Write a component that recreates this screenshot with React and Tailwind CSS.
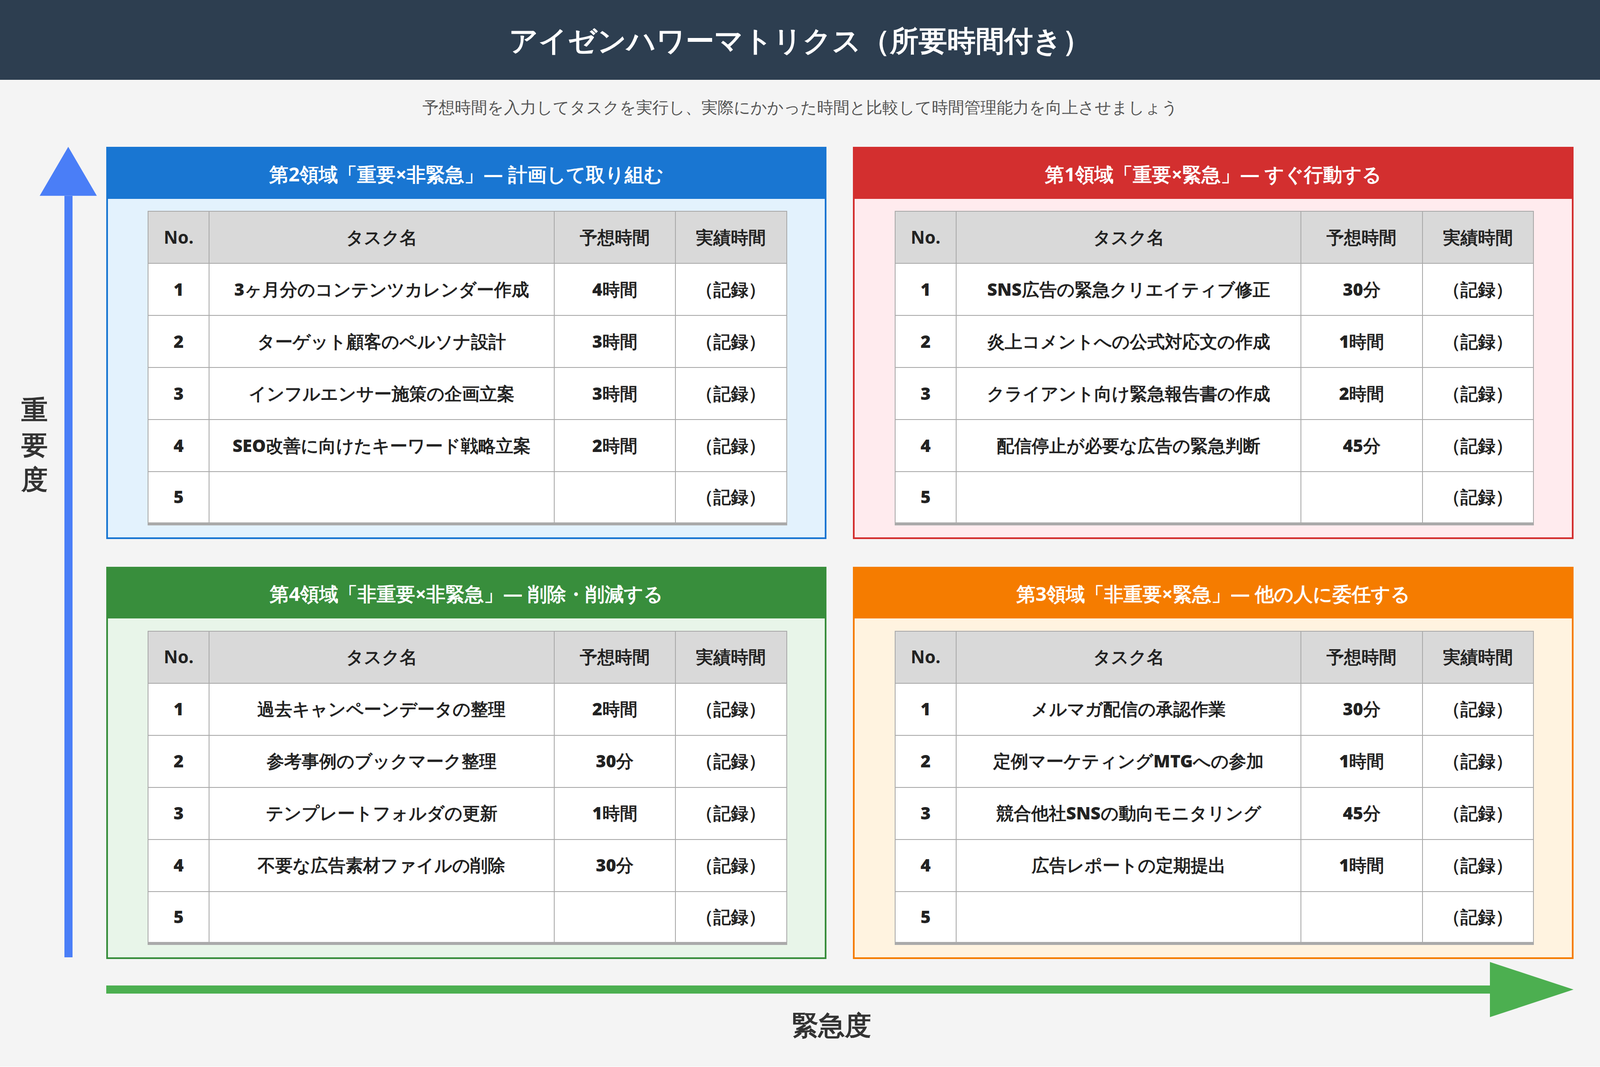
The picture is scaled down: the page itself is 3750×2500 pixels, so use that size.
import React from 'react';

const quads = [
  {
    title: '第2領域「重要×非緊急」— 計画して取り組む',
    head: 'bg-[#1976d2]', border: 'border-[#1976d2]', bg: 'bg-[#e3f2fd]',
    rows: [
      ['3ヶ月分のコンテンツカレンダー作成', '4時間'],
      ['ターゲット顧客のペルソナ設計', '3時間'],
      ['インフルエンサー施策の企画立案', '3時間'],
      ['SEO改善に向けたキーワード戦略立案', '2時間'],
      ['', ''],
    ],
  },
  {
    title: '第1領域「重要×緊急」— すぐ行動する',
    head: 'bg-[#d32f2f]', border: 'border-[#d32f2f]', bg: 'bg-[#ffebee]',
    rows: [
      ['SNS広告の緊急クリエイティブ修正', '30分'],
      ['炎上コメントへの公式対応文の作成', '1時間'],
      ['クライアント向け緊急報告書の作成', '2時間'],
      ['配信停止が必要な広告の緊急判断', '45分'],
      ['', ''],
    ],
  },
  {
    title: '第4領域「非重要×非緊急」— 削除・削減する',
    head: 'bg-[#388e3c]', border: 'border-[#388e3c]', bg: 'bg-[#e8f5e9]',
    rows: [
      ['過去キャンペーンデータの整理', '2時間'],
      ['参考事例のブックマーク整理', '30分'],
      ['テンプレートフォルダの更新', '1時間'],
      ['不要な広告素材ファイルの削除', '30分'],
      ['', ''],
    ],
  },
  {
    title: '第3領域「非重要×緊急」— 他の人に委任する',
    head: 'bg-[#f57c00]', border: 'border-[#f57c00]', bg: 'bg-[#fff3e0]',
    rows: [
      ['メルマガ配信の承認作業', '30分'],
      ['定例マーケティングMTGへの参加', '1時間'],
      ['競合他社SNSの動向モニタリング', '45分'],
      ['広告レポートの定期提出', '1時間'],
      ['', ''],
    ],
  },
];

const cell = 'border border-[#aaaaaa] h-[51px] p-0 text-center align-middle';

function Quadrant({ q }) {
  return (
    <div className={`flex flex-col border-2 ${q.border} ${q.bg}`}>
      <div className={`${q.head} h-[49px] flex items-center justify-center text-white text-[19px] font-bold`}>
        {q.title}
      </div>
      <div className="pl-[39px] pr-[37px] pt-[12px] pb-[12px]">
        <table className="w-full border-collapse text-[17px] font-black text-[#222] border-b-[3px] border-[#aaaaaa] bg-white">
          <colgroup>
            <col className="w-[60px]" />
            <col className="w-[338px]" />
            <col className="w-[119px]" />
            <col className="w-[109px]" />
          </colgroup>
          <thead>
            <tr className="bg-[#d9d9d9]">
              <th className={cell}>No.</th>
              <th className={cell}>タスク名</th>
              <th className={cell}>予想時間</th>
              <th className={cell}>実績時間</th>
            </tr>
          </thead>
          <tbody>
            {q.rows.map((r, i) => (
              <tr key={i}>
                <td className={cell}>{i + 1}</td>
                <td className={cell}>{r[0]}</td>
                <td className={cell}>{r[1]}</td>
                <td className={cell}>（記録）</td>
              </tr>
            ))}
          </tbody>
        </table>
      </div>
    </div>
  );
}

export default function App() {
  return (
    <div className="w-[1568px] h-[1045px] [zoom:2.3916] bg-[#f4f4f4] flex flex-col font-['Noto_Sans_CJK_JP','Noto_Sans',sans-serif] text-[#333] [font-feature-settings:'palt']">
      <div className="h-[78px] bg-[#2d3e50] flex items-center justify-center text-white text-[28px] font-bold shrink-0">
        アイゼンハワーマトリクス（所要時間付き）
      </div>
      <div className="h-[54px] flex items-center justify-center text-[16px] text-[#555] shrink-0">
        予想時間を入力してタスクを実行し、実際にかかった時間と比較して時間管理能力を向上させましょう
      </div>
      <div className="flex pt-[12px]">
        <div className="w-[104px] shrink-0 flex">
          <div className="w-[68px] flex justify-center pt-[240px]">
            <div className="text-[26px] font-black leading-[34px] flex flex-col items-center">
              <span>重</span><span>要</span><span>度</span>
            </div>
          </div>
          <div className="flex flex-col items-center w-[56px] -ml-[29px]">
            <svg width="56" height="48" viewBox="0 0 56 48"><polygon points="28,0 56,48 0,48" fill="#4a7ef7" /></svg>
            <div className="w-[8px] h-[746px] bg-[#4a7ef7]" />
          </div>
        </div>
        <div className="grid grid-cols-[706px_706px] gap-x-[26px] gap-y-[27px]">
          {quads.map((q, i) => <Quadrant key={i} q={q} />)}
        </div>
      </div>
      <div className="flex items-center pl-[104px] mt-[3px]">
        <div className="w-[1356px] h-[8px] bg-[#4caf50]" />
        <svg width="82" height="54" viewBox="0 0 82 54"><polygon points="0,0 82,27 0,54" fill="#4caf50" /></svg>
      </div>
      <div className="pl-[104px] w-[1526px] text-center text-[26px] font-black -mt-[12px]">緊急度</div>
    </div>
  );
}
